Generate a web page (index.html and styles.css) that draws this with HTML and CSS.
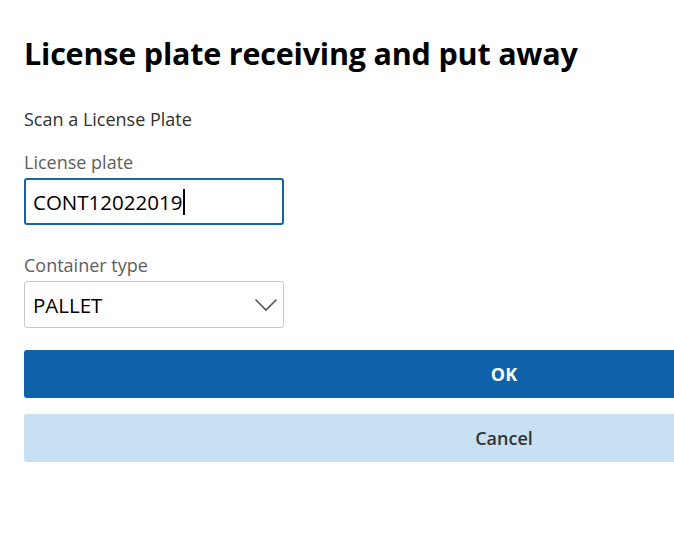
FILE: index.html
```html
<!DOCTYPE html>
<html lang="en">
<head>
	<meta charset="UTF-8">
	<title>License plate receiving and put away</title>
	<link rel="stylesheet" href="styles.css">
</head>
<body>
	<div class="page">
		<h1 class="title">License plate receiving and put away</h1>
		<p class="hint">Scan a License Plate</p>
		<div class="field">
			<label class="label" for="plate">License plate</label>
			<div class="input focused">
				<span id="plate" class="value">CONT12022019</span><span class="caret"></span>
			</div>
		</div>
		<div class="field">
			<label class="label">Container type</label>
			<div class="input select">
				<span class="value">PALLET</span>
				<svg class="chevron" width="24" height="14" viewBox="0 0 24 14">
					<path d="M1.5 1.5 L12 12 L22.5 1.5" fill="none" stroke="#555" stroke-width="1.6"/>
				</svg>
			</div>
		</div>
		<div class="actions">
			<button class="btn primary">OK</button>
			<button class="btn secondary">Cancel</button>
		</div>
	</div>
</body>
</html>
```

FILE: styles.css
```css
*{
	margin: 0;
	padding: 0;
	box-sizing: border-box;
}
html, body{
	overflow: hidden;
}
body{
	background: #fff;
	font-family: "Open Sans", "Noto Sans", sans-serif;
	color: #323130;
}
.page{
	padding: 30px 0 0 24px;
	width: 984px;
}
.title{
	font-size: 30.5px;
	font-weight: 700;
	color: #000;
	line-height: 46px;
	letter-spacing: -0.2px;
}
.hint{
	margin-top: 31px;
	font-size: 18px;
	line-height: 24px;
}
.field{
	margin-top: 19px;
}
.field + .field{
	margin-top: 28px;
}
.label{
	display: block;
	font-size: 18px;
	line-height: 24px;
	color: #605e5c;
	margin-bottom: 4px;
}
.input{
	width: 260px;
	height: 47px;
	display: flex;
	align-items: center;
	padding: 0 8px;
	border: 1px solid #c8c8c8;
	border-radius: 3px;
	font-size: 20.5px;
	color: #000;
}
.input.focused{
	border: 2px solid #1464a5;
	padding: 0 7px;
}
.caret{
	display: inline-block;
	width: 1.5px;
	height: 26px;
	background: #000;
	margin-left: 1px;
}
.select{
	justify-content: space-between;
	padding-right: 5px;
}
.chevron{
	display: block;
}
.actions{
	margin-top: 22px;
	display: flex;
	flex-direction: column;
	gap: 16px;
}
.btn{
	height: 48px;
	width: 960px;
	border: none;
	border-radius: 3px;
	font-family: "Open Sans", "Noto Sans", sans-serif;
	font-size: 18px;
	font-weight: 600;
}
.primary{
	background: #0f62a9;
	color: #fff;
	font-weight: 700;
}
.secondary{
	background: #c7e0f4;
	color: #333;
}
```
